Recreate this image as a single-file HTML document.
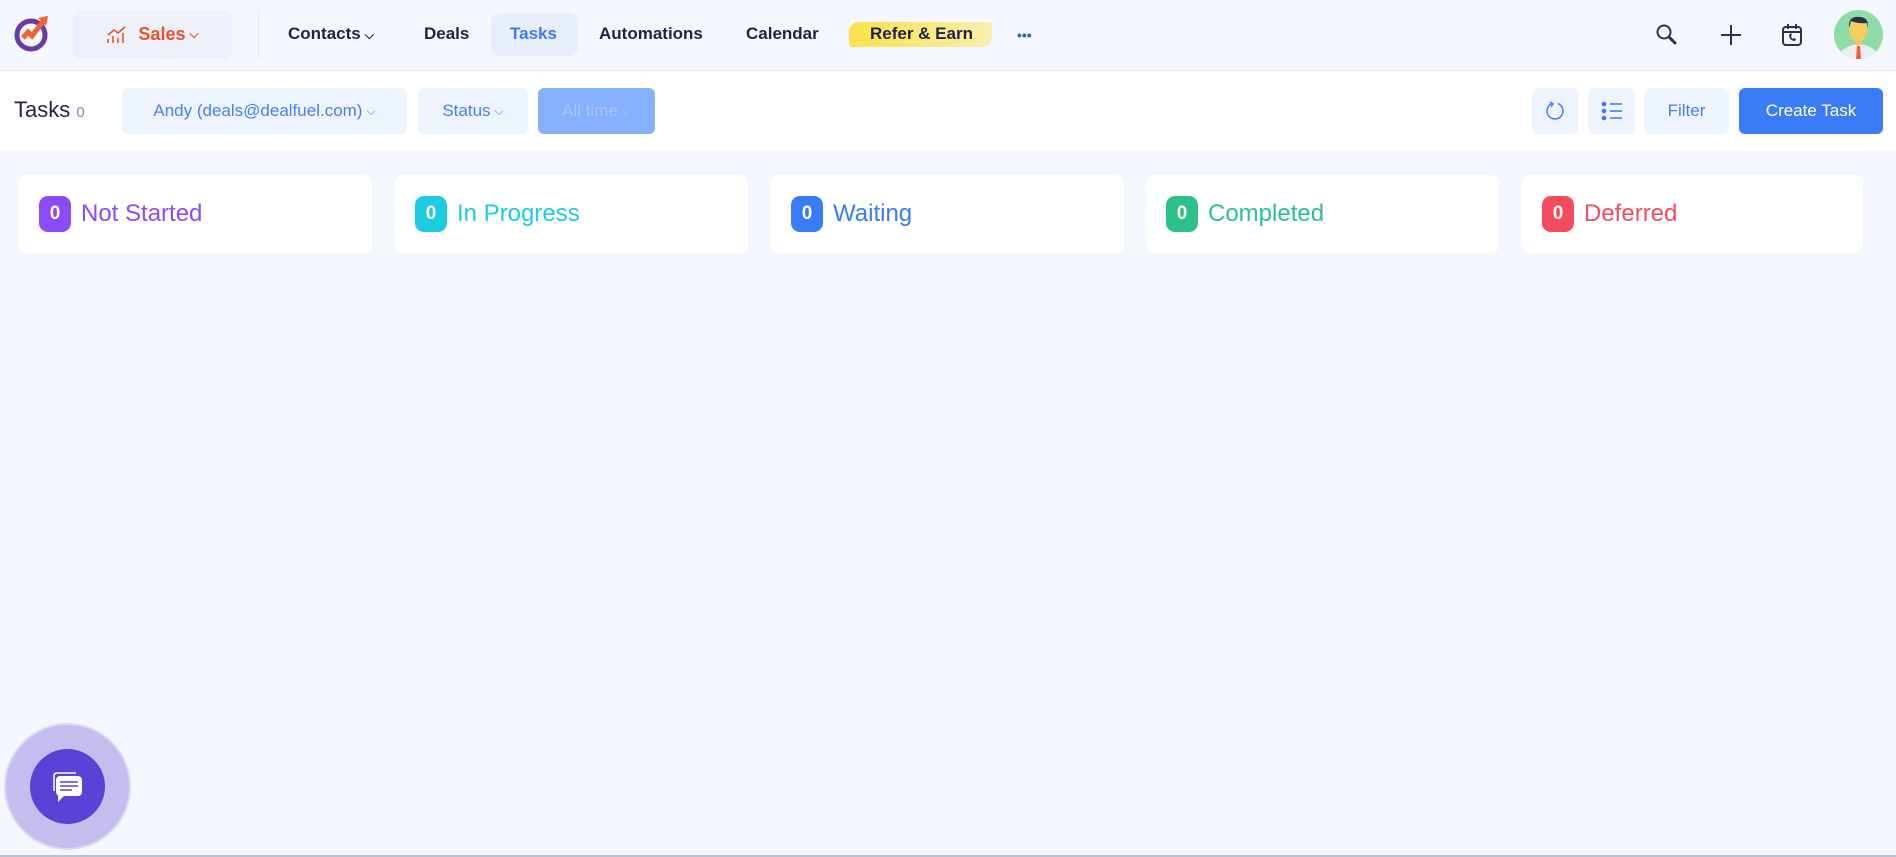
<!DOCTYPE html>
<html><head><meta charset="utf-8"><style>
*{box-sizing:border-box;margin:0;padding:0}
body{width:1896px;height:857px;background:#f4f7fe;font-family:"Liberation Sans",sans-serif;position:relative;overflow:hidden;color:#1e2347}
.hdr{position:absolute;left:0;top:0;width:1896px;height:71px;background:#f4f7fe;border-bottom:1px solid #e6eaf3}
.abs{position:absolute}
.nav{position:absolute;top:24px;font-size:17px;font-weight:bold;color:#1e2347}
.bar{position:absolute;left:0;top:72px;width:1896px;height:79px;background:#fff}
.pill{position:absolute;top:88px;height:46px;border-radius:6px;background:#edf4fe;color:#4a7ef0;font-size:17px;display:flex;align-items:center;justify-content:center}
.card{position:absolute;top:175px;width:353px;height:78px;background:#fff;border-radius:8px;display:flex;align-items:center;padding-left:20px}
.badge{width:32px;height:36px;border-radius:9px;color:#fff;font-weight:bold;font-size:19px;display:flex;align-items:center;justify-content:center;margin-right:10px}
.card span{font-size:24px}
.chev{font-size:12px;margin-left:4px}
</style></head><body>
<div class="hdr">
 <svg class="abs" style="left:14px;top:14px" width="38" height="38" viewBox="0 0 38 38"><circle cx="17" cy="21" r="14" fill="none" stroke="#6a3aa8" stroke-width="5"/><path d="M9 24 L14 18 L18 22 L30 6" stroke="#f2612d" stroke-width="5" fill="none"/><path d="M24 4 L34 2 L32 12Z" fill="#f2612d"/></svg>
 <div class="abs" style="left:73px;top:10px;width:159px;height:49px;border-radius:8px;background:#eef0f8;display:flex;align-items:center;justify-content:center;color:#e9502c;font-size:18px;font-weight:bold">
  <svg width="22" height="20" viewBox="0 0 22 20" style="margin-right:10px"><path d="M2 18v-4M7 18v-7M12 18v-5M17 18v-10M2 10 L8 5 L12 8 L19 2" stroke="#e9502c" stroke-width="1.6" fill="none"/></svg>Sales<span class="chev">⌵</span></div>
 <div class="abs" style="left:258px;top:10px;width:1px;height:49px;background:#e2e6ef"></div>
 <div class="nav" style="left:288px">Contacts<span class="chev">⌵</span></div>
 <div class="nav" style="left:424px">Deals</div>
 <div class="abs" style="left:491px;top:13px;width:87px;height:43px;border-radius:8px;background:#e8effb"></div>
 <div class="nav" style="left:510px;color:#3d7af5">Tasks</div>
 <div class="nav" style="left:599px">Automations</div>
 <div class="nav" style="left:746px">Calendar</div>
 <div class="abs" style="left:849px;top:22px;width:143px;height:25px;border-radius:10px 3px 10px 3px;background:linear-gradient(90deg,#fbe24a,#f8eeb0)"></div>
 <div class="nav" style="left:870px;top:24px">Refer &amp; Earn</div>
 <div class="nav" style="left:1017px;top:27px;color:#3a5fb0;letter-spacing:0px;font-size:14px">•••</div>
 <svg class="abs" style="left:1655px;top:23px" width="24" height="24" viewBox="0 0 24 24"><circle cx="9" cy="9" r="6.5" fill="none" stroke="#2b3155" stroke-width="2"/><path d="M14 14 L20 20" stroke="#2b3155" stroke-width="3" stroke-linecap="round"/></svg>
 <svg class="abs" style="left:1719px;top:23px" width="24" height="24"><path d="M12 2v20M2 12h20" stroke="#2b3155" stroke-width="2"/></svg>
 <svg class="abs" style="left:1781px;top:23px" width="22" height="24" viewBox="0 0 22 24"><rect x="2" y="4" width="18" height="18" rx="3" fill="none" stroke="#2b3155" stroke-width="2"/><path d="M2 9h18M7 1v5M15 1v5" stroke="#2b3155" stroke-width="2"/><path d="M8 12c0 4 3 6 6 6l1-2-2-1-1 1c-1-1-2-2-2-3l1-1-1-2z" fill="#2b3155"/></svg>
 <svg class="abs" style="left:1834px;top:10px" width="49" height="49" viewBox="0 0 49 49"><clipPath id="c"><circle cx="24.5" cy="24.5" r="24.5"/></clipPath><g clip-path="url(#c)"><rect width="49" height="49" fill="#8fdca6"/><path d="M4 49 Q6 36 24.5 34 Q43 36 45 49Z" fill="#eaeef2"/><path d="M23 36h3l1 13h-5z" fill="#f0603e"/><rect x="21" y="28" width="7" height="7" fill="#f6c657"/><ellipse cx="24.5" cy="20" rx="9" ry="11" fill="#fbcc5c"/><path d="M15 18 Q14 6 25 7 Q35 7 34 18 L33 13 Q25 14 17 11Z" fill="#26344a"/></g></svg>
</div>
<div class="bar"></div>
<div class="abs" style="left:14px;top:97px;font-size:22px;color:#1e2347">Tasks <span style="font-size:15px;color:#7d8aa3">0</span></div>
<div class="pill" style="left:122px;width:285px">Andy (deals@dealfuel.com)<span class="chev">⌵</span></div>
<div class="pill" style="left:418px;width:110px">Status<span class="chev">⌵</span></div>
<div class="pill" style="left:538px;width:117px;background:#85b0fd;color:#a8c6fd">All time<span class="chev">⌵</span></div>
<div class="pill" style="left:1532px;width:46px"><svg width="22" height="22" viewBox="0 0 22 22"><path d="M8 3.5 A8 8 0 1 0 14 3.5" fill="none" stroke="#4a7ef0" stroke-width="1.5"/><path d="M6 2 L9 4 L7 7" fill="none" stroke="#4a7ef0" stroke-width="1.5"/></svg></div>
<div class="pill" style="left:1588px;width:47px"><svg width="22" height="20" viewBox="0 0 22 20"><circle cx="3" cy="3" r="2.3" fill="#3d7af5"/><circle cx="3" cy="10" r="2.3" fill="#3d7af5"/><circle cx="3" cy="17" r="2.3" fill="#3d7af5"/><path d="M9 3h12M9 10h12M9 17h12" stroke="#3d7af5" stroke-width="1.5"/></svg></div>
<div class="pill" style="left:1644px;width:85px">Filter</div>
<div class="pill" style="left:1739px;width:144px;background:#3a7bf6;color:#fff;font-size:17px">Create Task</div>
<div class="card" style="left:19px"><div class="badge" style="background:#8b4cf7">0</div><span style="color:#8b4cf7">Not Started</span></div>
<div class="card" style="left:395px"><div class="badge" style="background:#1ccce3">0</div><span style="color:#1ccce3">In Progress</span></div>
<div class="card" style="left:771px"><div class="badge" style="background:#3a7bf6">0</div><span style="color:#3a7bf6">Waiting</span></div>
<div class="card" style="left:1146px"><div class="badge" style="background:#2dc08a">0</div><span style="color:#2dc08a">Completed</span></div>
<div class="card" style="left:1522px;width:341px"><div class="badge" style="background:#f44b5d">0</div><span style="color:#f44b5d">Deferred</span></div>
<div class="abs" style="left:4px;top:723px;width:127px;height:127px;border-radius:50%;background:#c5bdee;border:2px solid #dcd8f5"></div>
<div class="abs" style="left:30px;top:749px;width:75px;height:75px;border-radius:50%;background:#5b41d6"></div>
<svg class="abs" style="left:50px;top:769px" width="36" height="36" viewBox="0 0 36 36"><path d="M4 22 V7 Q4 4 7 4 H26" fill="none" stroke="#fff" stroke-width="1.5"/><rect x="6" y="7" width="26" height="20" rx="4" fill="#fff"/><path d="M8 26 L8 33 L14 27Z" fill="#fff"/><path d="M10 13h18M10 17h18M10 21h12" stroke="#5b41d6" stroke-width="1.5"/></svg>
<div class="abs" style="left:0;top:855px;width:1896px;height:2px;background:#b6c1d6"></div>
</body></html>
